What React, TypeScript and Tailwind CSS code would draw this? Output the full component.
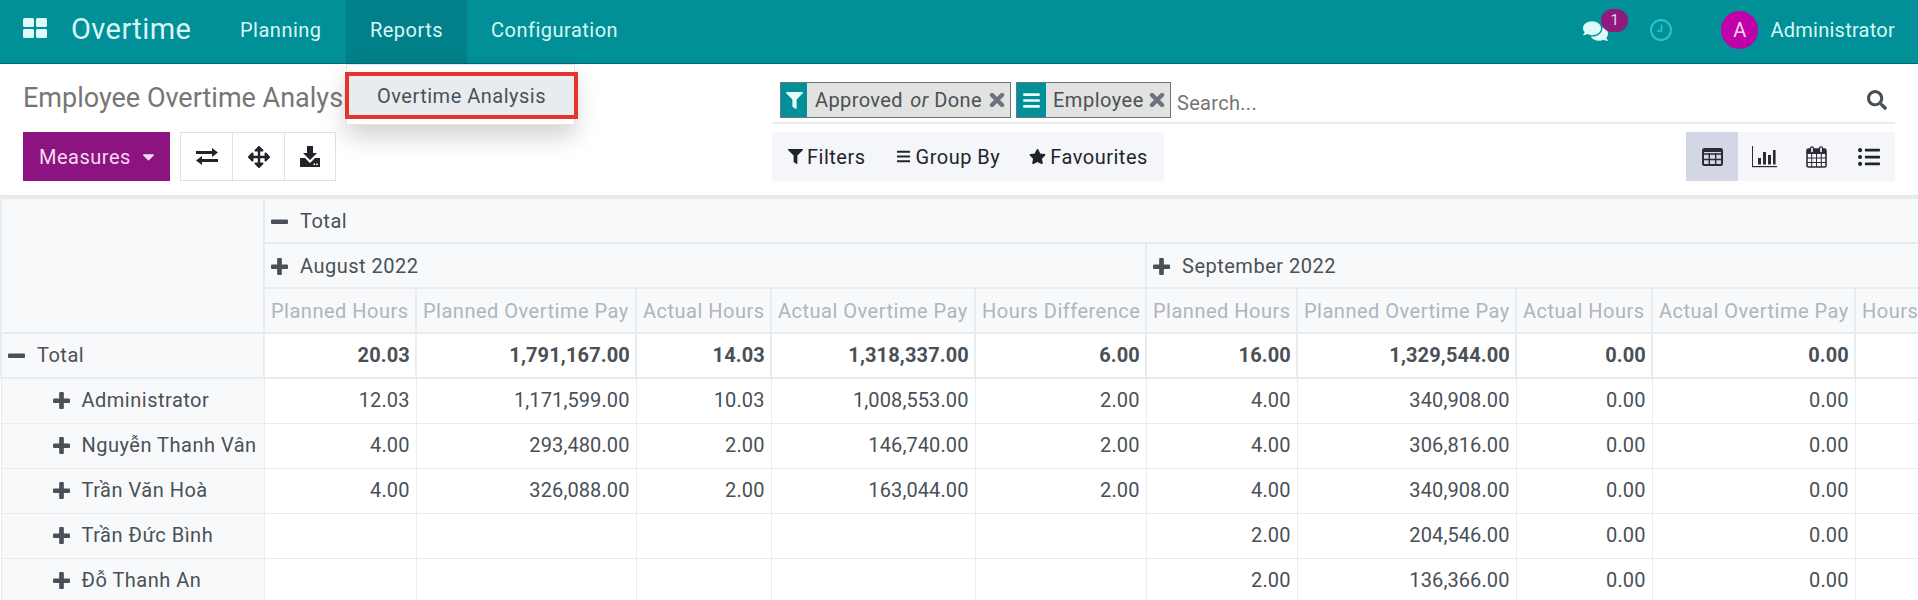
import { FaArrowsAlt, FaBars, FaCaretDown, FaComments, FaFilter, FaListUl, FaSearch, FaStar } from "react-icons/fa";

const measures = ["Planned Hours", "Planned Overtime Pay", "Actual Hours", "Actual Overtime Pay", "Hours Difference"];
const widths = ["w-[263px]", "w-[152px]", "w-[220px]", "w-[135px]", "w-[204px]", "w-[171px]", "w-[151px]", "w-[219px]", "w-[136px]", "w-[203px]", "w-[171px]"];

const rows = [
  { name: "Administrator", cells: ["12.03", "1,171,599.00", "10.03", "1,008,553.00", "2.00", "4.00", "340,908.00", "0.00", "0.00"] },
  { name: "Nguyễn Thanh Vân", cells: ["4.00", "293,480.00", "2.00", "146,740.00", "2.00", "4.00", "306,816.00", "0.00", "0.00"] },
  { name: "Trần Văn Hoà", cells: ["4.00", "326,088.00", "2.00", "163,044.00", "2.00", "4.00", "340,908.00", "0.00", "0.00"] },
  { name: "Trần Đức Bình", cells: ["", "", "", "", "", "2.00", "204,546.00", "0.00", "0.00"] },
  { name: "Đỗ Thanh An", cells: ["", "", "", "", "", "2.00", "136,366.00", "0.00", "0.00"] },
];
const totals = ["20.03", "1,791,167.00", "14.03", "1,318,337.00", "6.00", "16.00", "1,329,544.00", "0.00", "0.00"];

// font awesome 4 look: heavy plus, minus and cross
function Plus({ className }: { className?: string }) {
  return (
    <svg className={className} viewBox="0 0 16 16" fill="currentColor">
      <rect x="0" y="6" width="16" height="4.4" rx="1" />
      <rect x="5.8" y="0" width="4.4" height="16" rx="1" />
    </svg>
  );
}

function Minus({ className }: { className?: string }) {
  return (
    <svg className={className} viewBox="0 0 16 16" fill="currentColor">
      <rect x="0" y="6" width="16" height="4.4" rx="1" />
    </svg>
  );
}

function Cross() {
  return (
    <svg className="mt-[9px] h-[16px] w-[16px] text-[#6c757d]" viewBox="0 0 16 16" stroke="currentColor" strokeWidth="4.4" strokeLinecap="round">
      <path d="M3 3 L13 13 M13 3 L3 13" />
    </svg>
  );
}

function TableIcon() {
  return (
    <svg className="h-[18px] w-[21px] text-[#2b2b38]" viewBox="0 0 21 18" fill="none" stroke="currentColor">
      <rect x="1" y="1" width="19" height="16" rx="1.5" strokeWidth="2" />
      <path d="M1 6 H20 M1 11.5 H20 M7.3 5 V17 M13.7 5 V17" strokeWidth="1.4" />
      <rect x="1" y="1" width="19" height="3" fill="currentColor" stroke="none" />
    </svg>
  );
}

function ChartIcon() {
  return (
    <svg className="h-[22px] w-[25px] text-[#2b2b38]" viewBox="0 0 25 22" fill="currentColor">
      <rect x="0" y="0" width="1" height="21" />
      <rect x="0" y="20" width="25" height="1.2" />
      <rect x="6" y="12" width="3" height="6.5" />
      <rect x="11" y="6" width="3" height="12.5" />
      <rect x="16" y="9" width="3" height="9.5" />
      <rect x="21" y="4" width="2.6" height="14.5" />
    </svg>
  );
}

function CalendarIcon() {
  return (
    <svg className="h-[22px] w-[21px] text-[#2b2b38]" viewBox="0 0 21 22" fill="none" stroke="currentColor">
      <rect x="1" y="3" width="19" height="18" rx="1.5" strokeWidth="1.6" />
      <rect x="1" y="3" width="19" height="5" fill="currentColor" stroke="none" />
      <path d="M1 12 H20 M1 16.5 H20 M5.7 8 V21 M10.5 8 V21 M15.3 8 V21" strokeWidth="1" />
      <rect x="4.5" y="0.8" width="3" height="6" rx="1.5" fill="#f5f6fa" strokeWidth="1.3" />
      <rect x="13.5" y="0.8" width="3" height="6" rx="1.5" fill="#f5f6fa" strokeWidth="1.3" />
    </svg>
  );
}

function ExchangeIcon() {
  return (
    <svg className="h-[17px] w-[22px] text-[#212529]" viewBox="0 0 22 17" fill="currentColor">
      <rect x="0" y="3" width="17" height="3" />
      <path d="M16 0 L22 4.5 L16 9 Z" />
      <rect x="5" y="11" width="17" height="3" />
      <path d="M6 8 L0 12.5 L6 17 Z" />
    </svg>
  );
}

function DownloadIcon() {
  return (
    <svg className="h-[21px] w-[20px] text-[#212529]" viewBox="0 0 20 21" fill="currentColor">
      <path d="M7 0 H13 V7 H17 L10 14 L3 7 H7 Z" />
      <path d="M0 12 H5 L10 17 L15 12 H20 V21 H0 Z" />
      <rect x="13.5" y="17.5" width="1.6" height="1.6" fill="#fff" />
      <rect x="16.2" y="17.5" width="1.6" height="1.6" fill="#fff" />
    </svg>
  );
}

function ClockIcon() {
  return (
    <svg className="ml-[42px] h-[22px] w-[22px] text-[#2cc3c9]" viewBox="0 0 22 22" fill="none" stroke="currentColor" strokeWidth="2">
      <circle cx="11" cy="11" r="10" />
      <path d="M11.5 5.5 V12 H7" strokeWidth="1.5" />
    </svg>
  );
}

function Navbar() {
  return (
    <nav className="flex h-[64px] items-center border-b border-[#016a70] bg-[#018f98] pb-[3px] text-[20px] tracking-[0.5px] text-[#d8f8f6]">
      <svg className="ml-[23px] mb-[4px] h-[20px] w-[24px]" viewBox="0 0 24 20" fill="#dffbf9">
        <rect x="0" y="0" width="11" height="9" rx="1.5" />
        <rect x="13" y="0" width="11" height="9" rx="1.5" />
        <rect x="0" y="11" width="11" height="9" rx="1.5" />
        <rect x="13" y="11" width="11" height="9" rx="1.5" />
      </svg>
      <span className="ml-[24px] w-[169px] text-[29px] tracking-[0.4px]">Overtime</span>
      <span className="w-[106px]">Planning</span>
      <span className="flex h-[63px] w-[121px] items-center justify-center self-start bg-[#01808a] pb-[3px]">Reports</span>
      <span className="ml-[24px]">Configuration</span>
      <div className="relative ml-auto h-[22px] w-[25px]">
        <FaComments className="h-[24px] w-[25px] text-[#dffbf9]" />
        <span className="absolute -top-[10px] left-[18px] flex h-[23px] w-[27px] items-center justify-center rounded-full bg-[#8f1a80] text-[15px] text-[#e8d8e8]">1</span>
      </div>
      <ClockIcon />
      <span className="ml-[49px] flex h-[38px] w-[37px] items-center justify-center rounded-full bg-[#c000a8] text-[#f5d8f0]">A</span>
      <span className="ml-[12px] mr-[23px] tracking-[0.25px]">Administrator</span>
    </nav>
  );
}

function ReportsMenu() {
  return (
    <div className="absolute left-[346px] top-[64px] h-[61px] w-[229px] border border-[#e4e4e4] bg-white shadow-[0_12px_24px_rgba(0,0,0,0.18)]">
      <div className="absolute -left-[2px] top-[7px] flex h-[47px] w-[233px] items-center border-[4px] border-[#e5332e] bg-[#e9ecef] pl-[28px] text-[20px] tracking-[0.5px] text-[#495057]">
        Overtime Analysis
      </div>
    </div>
  );
}

function ControlPanel() {
  return (
    <div className="grid h-[133px] grid-cols-[772px_1fr] border-b-2 border-[#e6e8ea] pr-[23px] text-[20px] tracking-[0.5px]">
      <div className="flex flex-col pl-[23px]">
        <h1 className="mt-[16px] h-[36px] text-[27px] leading-[36px] tracking-normal text-[#767676]">Employee Overtime Analysis</h1>
        <div className="mt-[16px] flex">
          <button className="flex h-[49px] w-[147px] items-center pl-[16px] gap-[8px] bg-[#8c1380] text-[#f3dcef]">
            Measures <FaCaretDown className="h-[19px] w-[19px]" />
          </button>
          <div className="ml-[10px] flex h-[49px] border border-[#dee2e6] text-[#212529]">
            <span className="flex w-[52px] items-center justify-center border-r border-[#dee2e6]"><ExchangeIcon /></span>
            <span className="flex w-[52px] items-center justify-center border-r border-[#dee2e6]"><FaArrowsAlt className="h-[22px] w-[22px]" /></span>
            <span className="flex w-[50px] items-center justify-center"><DownloadIcon /></span>
          </div>
        </div>
      </div>
      <div className="flex flex-col">
        <div className="flex h-[60px] items-start border-b-2 border-[#e9ecef] pt-[18px] pl-[8px] pr-[8px]">
          <div className="flex h-[36px] w-[231px] border border-[#6c757d] bg-[#e2e2e0] tracking-[0.4px] text-[#495057]">
            <span className="flex w-[26px] items-center justify-center bg-[#018f98]"><FaFilter className="h-[17px] w-[17px] text-[#e8fbfa]" /></span>
            <span className="ml-[8px] w-[174px] whitespace-nowrap leading-[35px]">Approved <em className="ml-[2px]">or</em> Done</span>
            <Cross />
          </div>
          <div className="ml-[5px] flex h-[36px] w-[155px] border border-[#6c757d] bg-[#e2e2e0] text-[#495057]">
            <span className="flex w-[29px] items-center justify-center bg-[#018f98]"><FaBars className="h-[19px] w-[19px] text-[#e8fbfa]" /></span>
            <span className="ml-[7px] w-[96px] leading-[35px]">Employee</span>
            <Cross />
          </div>
          <span className="ml-[6px] mt-[6px] tracking-[0.3px] text-[#767676]">Search...</span>
          <FaSearch className="ml-auto mt-[8px] h-[20px] w-[20px] text-[#495057]" />
        </div>
        <div className="mt-[8px] flex h-[49px] justify-between">
          <div className="flex w-[392px] items-center bg-[#f5f6fa] pl-[16px] text-[#212529]">
            <FaFilter className="h-[15px] w-[15px]" />
            <span className="ml-[4px]">Filters</span>
            <FaBars className="ml-[30px] h-[15px] w-[15px]" />
            <span className="ml-[5px]">Group By</span>
            <FaStar className="ml-[29px] h-[17px] w-[17px]" />
            <span className="ml-[4px]">Favourites</span>
          </div>
          <div className="flex w-[209px] bg-[#f5f6fa] text-[#212529]">
            <span className="flex w-[52px] items-center justify-center bg-[#d3d6e5]"><TableIcon /></span>
            <span className="flex w-[52px] items-center justify-center"><ChartIcon /></span>
            <span className="flex w-[52px] items-center justify-center"><CalendarIcon /></span>
            <span className="flex w-[53px] items-center justify-center"><FaListUl className="h-[22px] w-[22px]" /></span>
          </div>
        </div>
      </div>
    </div>
  );
}

function PivotTable() {
  return (
    <div className="h-[403px] overflow-hidden">
      <table className="w-[2025px] table-fixed border-collapse text-[20px] tracking-[0.5px] text-[#495057]">
        <colgroup>
          {widths.map((w, i) => <col key={i} className={w} />)}
        </colgroup>
        <thead>
          <tr className="h-[45px]">
            <th rowSpan={3} className="border-2 border-[#e9ecef] bg-[#f8f9fa]" />
            <th colSpan={10} className="border-2 border-[#e9ecef] bg-[#f8f9fa] pl-[6px] text-left font-normal">
              <Minus className="mr-[12px] inline h-[17px] w-[17px] align-[-2px]" />Total
            </th>
          </tr>
          <tr className="h-[45px]">
            {["August 2022", "September 2022"].map((m) => (
              <th key={m} colSpan={5} className="border-2 border-[#e9ecef] bg-[#f8f9fa] pl-[6px] text-left font-normal">
                <Plus className="mr-[12px] inline h-[17px] w-[17px] align-[-2px]" />{m}
              </th>
            ))}
          </tr>
          <tr className="h-[45px]">
            {[...measures, ...measures].map((m, i) => (
              <th key={i} className="overflow-hidden whitespace-nowrap border-2 border-[#e9ecef] bg-[#f8f9fa] pl-[6px] text-left font-normal tracking-[0.5px] text-[#adb5bd]">{m}</th>
            ))}
          </tr>
        </thead>
        <tbody>
          <tr className="h-[45px]">
            <td className="border-2 border-[#e9ecef] bg-[#f8f9fa] pb-[2px] pl-[6px]">
              <Minus className="mr-[12px] inline h-[17px] w-[17px] align-[-2px]" />Total
            </td>
            {totals.map((v, i) => <td key={i} className="border-2 border-[#e9ecef] px-[5px] pb-[2px] text-right font-bold tracking-[0.15px]">{v}</td>)}
            <td className="border-2 border-[#e9ecef]" />
          </tr>
          {rows.map((r) => (
            <tr key={r.name} className="h-[45px]">
              <td className="whitespace-nowrap border border-[#e9ecef] bg-[#f8f9fa] pb-[2px] pl-[51px]">
                <Plus className="mr-[12px] inline h-[17px] w-[17px] align-[-2px]" />{r.name}
              </td>
              {r.cells.map((v, i) => <td key={i} className="border border-[#e9ecef] px-[6px] pb-[2px] text-right tracking-[0.1px]">{v}</td>)}
              <td className="border border-[#e9ecef]" />
            </tr>
          ))}
        </tbody>
      </table>
    </div>
  );
}

export default function App() {
  return (
    <div className="relative h-[600px] w-[1918px] overflow-hidden bg-white font-[Roboto,sans-serif]">
      <Navbar />
      <ControlPanel />
      <PivotTable />
      <ReportsMenu />
    </div>
  );
}
